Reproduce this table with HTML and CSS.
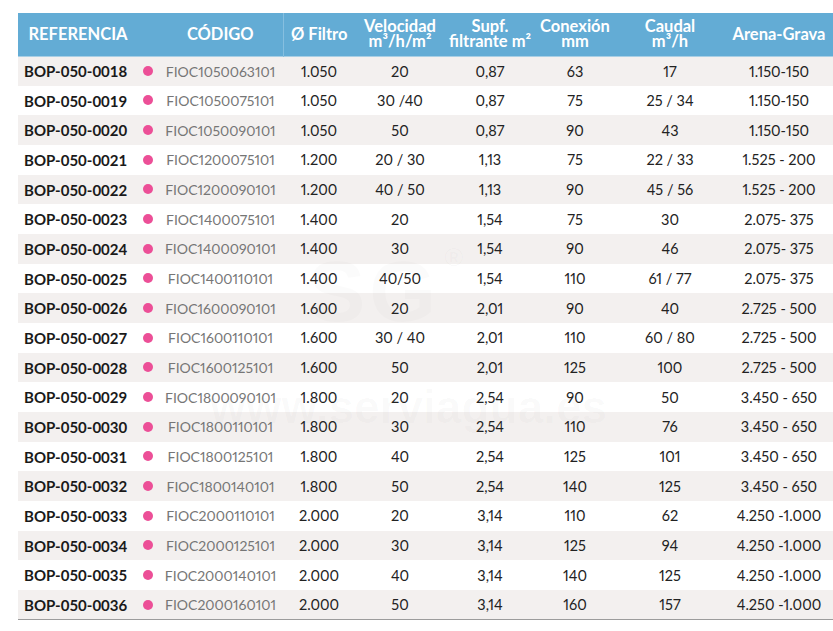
FILE: index.html
```html
<!DOCTYPE html>
<html lang="es">
<head>
<meta charset="utf-8">
<title>Filtros</title>
<link rel="stylesheet" href="styles.css">
</head>
<body>
<div class="wrap">
  <table class="tbl">
    <colgroup>
      <col class="c-ref"><col class="c-dot"><col class="c-cod"><col class="c-fil"><col class="c-vel"><col class="c-sup"><col class="c-con"><col class="c-cau"><col class="c-are">
    </colgroup>
    <thead>
      <tr>
        <th>REFERENCIA</th>
        <th></th>
        <th class="sep">CÓDIGO</th>
        <th>Ø Filtro</th>
        <th>Velocidad<br>m³/h/m²</th>
        <th>Supf.<br>filtrante m²</th>
        <th>Conexión<br>mm</th>
        <th>Caudal<br>m³/h</th>
        <th>Arena-Grava</th>
      </tr>
    </thead>
    <tbody>
      <tr><td class="ref">BOP-050-0018</td><td><span class="dot"></span></td><td class="cod">FIOC1050063101</td><td>1.050</td><td>20</td><td>0,87</td><td>63</td><td>17</td><td>1.150-150</td></tr>
      <tr><td class="ref">BOP-050-0019</td><td><span class="dot"></span></td><td class="cod">FIOC1050075101</td><td>1.050</td><td>30 /40</td><td>0,87</td><td>75</td><td>25 / 34</td><td>1.150-150</td></tr>
      <tr><td class="ref">BOP-050-0020</td><td><span class="dot"></span></td><td class="cod">FIOC1050090101</td><td>1.050</td><td>50</td><td>0,87</td><td>90</td><td>43</td><td>1.150-150</td></tr>
      <tr><td class="ref">BOP-050-0021</td><td><span class="dot"></span></td><td class="cod">FIOC1200075101</td><td>1.200</td><td>20 / 30</td><td>1,13</td><td>75</td><td>22 / 33</td><td>1.525 - 200</td></tr>
      <tr><td class="ref">BOP-050-0022</td><td><span class="dot"></span></td><td class="cod">FIOC1200090101</td><td>1.200</td><td>40 / 50</td><td>1,13</td><td>90</td><td>45 / 56</td><td>1.525 - 200</td></tr>
      <tr><td class="ref">BOP-050-0023</td><td><span class="dot"></span></td><td class="cod">FIOC1400075101</td><td>1.400</td><td>20</td><td>1,54</td><td>75</td><td>30</td><td>2.075- 375</td></tr>
      <tr><td class="ref">BOP-050-0024</td><td><span class="dot"></span></td><td class="cod">FIOC1400090101</td><td>1.400</td><td>30</td><td>1,54</td><td>90</td><td>46</td><td>2.075- 375</td></tr>
      <tr><td class="ref">BOP-050-0025</td><td><span class="dot"></span></td><td class="cod">FIOC1400110101</td><td>1.400</td><td>40/50</td><td>1,54</td><td>110</td><td>61 / 77</td><td>2.075- 375</td></tr>
      <tr><td class="ref">BOP-050-0026</td><td><span class="dot"></span></td><td class="cod">FIOC1600090101</td><td>1.600</td><td>20</td><td>2,01</td><td>90</td><td>40</td><td>2.725 - 500</td></tr>
      <tr><td class="ref">BOP-050-0027</td><td><span class="dot"></span></td><td class="cod">FIOC1600110101</td><td>1.600</td><td>30 / 40</td><td>2,01</td><td>110</td><td>60 / 80</td><td>2.725 - 500</td></tr>
      <tr><td class="ref">BOP-050-0028</td><td><span class="dot"></span></td><td class="cod">FIOC1600125101</td><td>1.600</td><td>50</td><td>2,01</td><td>125</td><td>100</td><td>2.725 - 500</td></tr>
      <tr><td class="ref">BOP-050-0029</td><td><span class="dot"></span></td><td class="cod">FIOC1800090101</td><td>1.800</td><td>20</td><td>2,54</td><td>90</td><td>50</td><td>3.450 - 650</td></tr>
      <tr><td class="ref">BOP-050-0030</td><td><span class="dot"></span></td><td class="cod">FIOC1800110101</td><td>1.800</td><td>30</td><td>2,54</td><td>110</td><td>76</td><td>3.450 - 650</td></tr>
      <tr><td class="ref">BOP-050-0031</td><td><span class="dot"></span></td><td class="cod">FIOC1800125101</td><td>1.800</td><td>40</td><td>2,54</td><td>125</td><td>101</td><td>3.450 - 650</td></tr>
      <tr><td class="ref">BOP-050-0032</td><td><span class="dot"></span></td><td class="cod">FIOC1800140101</td><td>1.800</td><td>50</td><td>2,54</td><td>140</td><td>125</td><td>3.450 - 650</td></tr>
      <tr><td class="ref">BOP-050-0033</td><td><span class="dot"></span></td><td class="cod">FIOC2000110101</td><td>2.000</td><td>20</td><td>3,14</td><td>110</td><td>62</td><td>4.250 -1.000</td></tr>
      <tr><td class="ref">BOP-050-0034</td><td><span class="dot"></span></td><td class="cod">FIOC2000125101</td><td>2.000</td><td>30</td><td>3,14</td><td>125</td><td>94</td><td>4.250 -1.000</td></tr>
      <tr><td class="ref">BOP-050-0035</td><td><span class="dot"></span></td><td class="cod">FIOC2000140101</td><td>2.000</td><td>40</td><td>3,14</td><td>140</td><td>125</td><td>4.250 -1.000</td></tr>
      <tr><td class="ref">BOP-050-0036</td><td><span class="dot"></span></td><td class="cod">FIOC2000160101</td><td>2.000</td><td>50</td><td>3,14</td><td>160</td><td>157</td><td>4.250 -1.000</td></tr>
    </tbody>
  </table>
  <div class="watermark" aria-hidden="true">
    <div class="wm-logo">SG<span class="wm-r">®</span></div>
    <div class="wm-url">www.serviagua.es</div>
  </div>
</div>
</body>
</html>
```

FILE: styles.css
```css
html, body {
  margin: 0;
  padding: 0;
  background: #ffffff;
}

body {
  font-family: "Lato", "Inter", "DejaVu Sans", sans-serif;
  color: #1e1e1e;
  font-variant-numeric: proportional-nums;
}

.wrap {
  position: relative;
  padding: 13px 0 0 18px;
}

.tbl {
  border-collapse: collapse;
  table-layout: fixed;
  width: 815px;
}

.c-ref { width: 120px; }
.c-dot { width: 20px; }
.c-cod { width: 125px; }
.c-fil { width: 72px; }
.c-vel { width: 90px; }
.c-sup { width: 90px; }
.c-con { width: 80px; }
.c-cau { width: 110px; }
.c-are { width: 108px; }

.tbl thead tr {
  background: #63acd5;
  height: 43px;
  border-bottom: 1px solid #a8cfe5;
}

.tbl th {
  color: #ffffff;
  font-weight: 700;
  font-size: 16.5px;
  line-height: 15px;
  text-align: center;
  padding: 0;
  vertical-align: middle;
  white-space: nowrap;
}

.tbl th.sep {
  border-right: 1px solid #86bfe0;
}

.tbl tbody tr {
  height: 29.68px;
}

.tbl tbody tr:nth-child(odd) {
  background: #f3f0ef;
}

.tbl tbody tr:last-child {
  border-bottom: 1px solid #9c9c9c;
}

.tbl td {
  padding: 0;
  font-size: 14.5px;
  text-align: center;
  vertical-align: middle;
  white-space: nowrap;
  color: #222222;
}

.tbl td.ref {
  text-align: left;
  padding-left: 6px;
  font-weight: 700;
  font-size: 15px;
  color: #1a1a1a;
  font-variant-numeric: tabular-nums;
}

.tbl td.cod {
  color: #767676;
  font-size: 14px;
}

.dot {
  display: inline-block;
  width: 10px;
  height: 10px;
  border-radius: 50%;
  background: #ec4f97;
  vertical-align: middle;
  position: relative;
  top: -2px;
}

.watermark {
  position: absolute;
  left: 0;
  top: 0;
  width: 833px;
  pointer-events: none;
}

.wm-logo {
  position: absolute;
  left: 308px;
  top: 242px;
  font-family: "Liberation Sans", sans-serif;
  font-weight: 700;
  font-size: 86px;
  letter-spacing: 4px;
  color: rgba(120, 120, 120, 0.03);
}

.wm-r {
  font-size: 26px;
  vertical-align: top;
  margin-left: 4px;
}

.wm-url {
  position: absolute;
  left: 210px;
  top: 380px;
  font-family: "Liberation Sans", sans-serif;
  font-weight: 700;
  font-size: 46px;
  color: rgba(120, 120, 120, 0.03);
}
```
